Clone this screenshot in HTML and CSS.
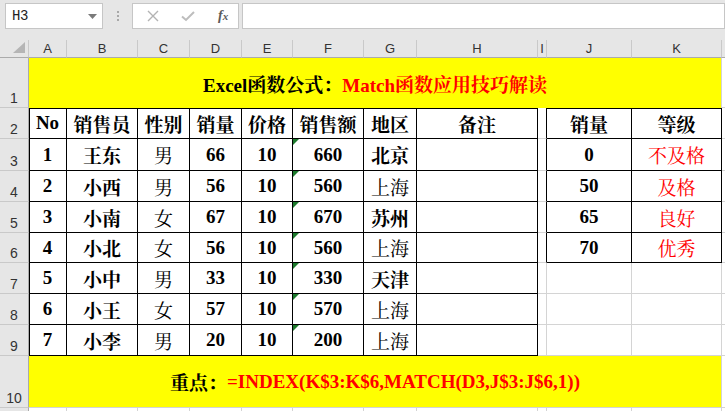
FILE: index.html
```html
<!DOCTYPE html>
<html>
<head>
<meta charset="utf-8">
<link rel="stylesheet" href="styles.css">
</head>
<body>
<div class="bar">
  <div class="namebox"><span class="ref">H3</span><svg class="dd" width="9" height="5" viewBox="0 0 9 5"><path d="M0 0H9L4.5 5Z" fill="#7a7a7a"/></svg></div>
  <div class="dots"><i></i><i></i><i></i></div>
  <div class="fxbox">
    <svg class="ic" width="12" height="12" viewBox="0 0 12 12"><path d="M1 1L11 11M11 1L1 11" stroke="#b3b3b3" stroke-width="1.4" fill="none"/></svg>
    <svg class="ic" width="14" height="12" viewBox="0 0 14 12"><path d="M1 6.5L5 10L13 2" stroke="#bdbdbd" stroke-width="2" fill="none"/></svg>
    <span class="fx">f<span class="fxx">x</span></span>
  </div>
  <div class="input"></div>
</div>
<div class="sheet">
  <div class="ch corner"><svg width="12" height="11" viewBox="0 0 12 11"><path d="M12 0V11H0Z" fill="#b5b5b5"/></svg></div>
  <div class="ch">A</div><div class="ch">B</div><div class="ch">C</div><div class="ch">D</div><div class="ch">E</div><div class="ch">F</div><div class="ch">G</div><div class="ch">H</div><div class="ch">I</div><div class="ch">J</div><div class="ch">K</div><div class="ch last"></div>

  <div class="rh">1</div>
  <div class="y title"><span>Excel函数公式：</span><span class="red">Match函数应用技巧解读</span></div>
  <div class="c e"></div>

  <div class="rh">2</div>
  <div class="c k LT">No</div><div class="c k T">销售员</div><div class="c k T">性别</div><div class="c k T">销量</div><div class="c k T">价格</div><div class="c k T">销售额</div><div class="c k T">地区</div><div class="c k T">备注</div><div class="c bR"></div><div class="c k T">销量</div><div class="c k T">等级</div><div class="c e"></div>

  <div class="rh">3</div>
  <div class="c k L">1</div><div class="c k">王东</div><div class="c k n">男</div><div class="c k">66</div><div class="c k">10</div><div class="c k tri">660</div><div class="c k">北京</div><div class="c k"></div><div class="c bR"></div><div class="c k">0</div><div class="c k red n">不及格</div><div class="c e"></div>

  <div class="rh">4</div>
  <div class="c k L">2</div><div class="c k">小西</div><div class="c k n">男</div><div class="c k">56</div><div class="c k">10</div><div class="c k tri">560</div><div class="c k n">上海</div><div class="c k"></div><div class="c bR"></div><div class="c k">50</div><div class="c k red n">及格</div><div class="c e"></div>

  <div class="rh">5</div>
  <div class="c k L">3</div><div class="c k">小南</div><div class="c k n">女</div><div class="c k">67</div><div class="c k">10</div><div class="c k tri">670</div><div class="c k">苏州</div><div class="c k"></div><div class="c bR"></div><div class="c k">65</div><div class="c k red n">良好</div><div class="c e"></div>

  <div class="rh">6</div>
  <div class="c k L">4</div><div class="c k">小北</div><div class="c k n">女</div><div class="c k">56</div><div class="c k">10</div><div class="c k tri">560</div><div class="c k n">上海</div><div class="c k"></div><div class="c bR"></div><div class="c k">70</div><div class="c k red n">优秀</div><div class="c e"></div>

  <div class="rh">7</div>
  <div class="c k L">5</div><div class="c k">小中</div><div class="c k n">男</div><div class="c k">33</div><div class="c k">10</div><div class="c k tri">330</div><div class="c k">天津</div><div class="c k"></div><div class="c"></div><div class="c"></div><div class="c"></div><div class="c e"></div>

  <div class="rh">8</div>
  <div class="c k L">6</div><div class="c k">小王</div><div class="c k n">女</div><div class="c k">57</div><div class="c k">10</div><div class="c k tri">570</div><div class="c k n">上海</div><div class="c k"></div><div class="c"></div><div class="c"></div><div class="c"></div><div class="c e"></div>

  <div class="rh">9</div>
  <div class="c k L">7</div><div class="c k">小李</div><div class="c k n">男</div><div class="c k">20</div><div class="c k">10</div><div class="c k tri">200</div><div class="c k n">上海</div><div class="c k"></div><div class="c"></div><div class="c"></div><div class="c"></div><div class="c e"></div>

  <div class="rh">10</div>
  <div class="y foot"><span>重点：</span><span class="red">=INDEX(K$3:K$6,MATCH(D3,J$3:J$6,1))</span></div>
  <div class="c e"></div>

  <div class="rh"></div>
  <div class="c"></div><div class="c"></div><div class="c"></div><div class="c"></div><div class="c"></div><div class="c"></div><div class="c"></div><div class="c"></div><div class="c"></div><div class="c"></div><div class="c"></div><div class="c e"></div>
</div>
</body>
</html>
```
FILE: styles.css
```css
html, body {
  margin: 0;
  padding: 0;
  background: #e6e6e6;
  overflow: hidden;
  width: 725px;
  height: 411px;
}

.bar {
  height: 40px;
  display: flex;
  align-items: flex-start;
  background: #e6e6e6;
  box-sizing: border-box;
  padding-top: 3px;
}

.namebox {
  margin-left: 5px;
  width: 101px;
  height: 26px;
  box-sizing: border-box;
  background: #fff;
  border: 1px solid #c6c6c6;
  display: flex;
  align-items: center;
  justify-content: space-between;
  padding: 0 5px 0 6px;
}

.ref {
  font-family: "Liberation Mono", "DejaVu Sans Mono", monospace;
  font-size: 14px;
  color: #222;
  letter-spacing: -0.5px;
}

.dots {
  width: 30px;
  height: 26px;
  display: flex;
  flex-direction: column;
  align-items: center;
  justify-content: center;
  gap: 2px;
}

.dots i {
  display: block;
  width: 2px;
  height: 2px;
  background: #a8a8a8;
}

.fxbox {
  width: 110px;
  height: 26px;
  box-sizing: border-box;
  background: #fff;
  border: 1px solid #c6c6c6;
  display: flex;
  align-items: center;
  padding-left: 14px;
  gap: 22px;
}

.fx {
  font-family: "Liberation Serif", serif;
  font-style: italic;
  font-weight: bold;
  font-size: 14px;
  color: #5a5a5a;
  margin-left: 1px;
}

.fxx {
  font-size: 11px;
}

.input {
  margin-left: 3px;
  width: 500px;
  height: 26px;
  box-sizing: border-box;
  background: #fff;
  border: 1px solid #c6c6c6;
}

.sheet {
  display: grid;
  grid-template-columns: 29px 38px 71px 52px 52px 51px 71px 53px 121px 9px 85px 90px 3px;
  grid-template-rows: 18px 50px 31px 32px 31px 31px 30px 31px 31px 31px 52px 20px;
  background: #fff;
  font-family: "Liberation Serif", "Noto Serif CJK SC", "Noto Sans CJK SC", serif;
  font-size: 19px;
  font-weight: bold;
  color: #000;
}

.ch {
  background: #e6e6e6;
  border-right: 1px solid #c9c9c9;
  border-bottom: 1px solid #ababab;
  box-sizing: border-box;
  display: flex;
  align-items: flex-end;
  justify-content: center;
  font-family: "Liberation Sans", Arial, sans-serif;
  font-weight: normal;
  font-size: 13px;
  color: #333;
  line-height: 16px;
}

.ch.corner {
  align-items: flex-end;
  justify-content: flex-end;
  padding: 0 3px 4px 0;
}

.ch.last {
  border-right: none;
}

.rh {
  background: #e6e6e6;
  border-right: 1px solid #ababab;
  border-bottom: 1px solid #c9c9c9;
  box-sizing: border-box;
  display: flex;
  align-items: flex-end;
  justify-content: center;
  font-family: "Liberation Sans", Arial, sans-serif;
  font-weight: normal;
  font-size: 14px;
  color: #333;
  line-height: 16px;
  padding-bottom: 1px;
}

.c {
  border-right: 1px solid #d4d4d4;
  border-bottom: 1px solid #d4d4d4;
  box-sizing: border-box;
  display: flex;
  align-items: center;
  justify-content: center;
  white-space: nowrap;
  position: relative;
}

.c.e {
  border-right: none;
}

.k {
  border-right-color: #000;
  border-bottom-color: #000;
}

.bR {
  border-right-color: #000;
}

.L {
  box-shadow: inset 1px 0 0 #000;
}

.T {
  box-shadow: inset 0 1px 0 #000;
}

.LT {
  box-shadow: inset 1px 0 0 #000, inset 0 1px 0 #000;
}

.n {
  font-weight: normal;
}

.red {
  color: #ff0000;
}

.y {
  grid-column: span 11;
  background: #ffff00;
  border-right: 1px solid #d4d4d4;
  box-sizing: border-box;
  display: flex;
  align-items: center;
  justify-content: center;
  white-space: nowrap;
}

.foot {
  border-bottom: 1px solid #d4d4d4;
}

.tri::before {
  content: "";
  position: absolute;
  left: 0;
  top: 0;
  border-top: 6px solid #1d7a2c;
  border-right: 6px solid transparent;
}
```
